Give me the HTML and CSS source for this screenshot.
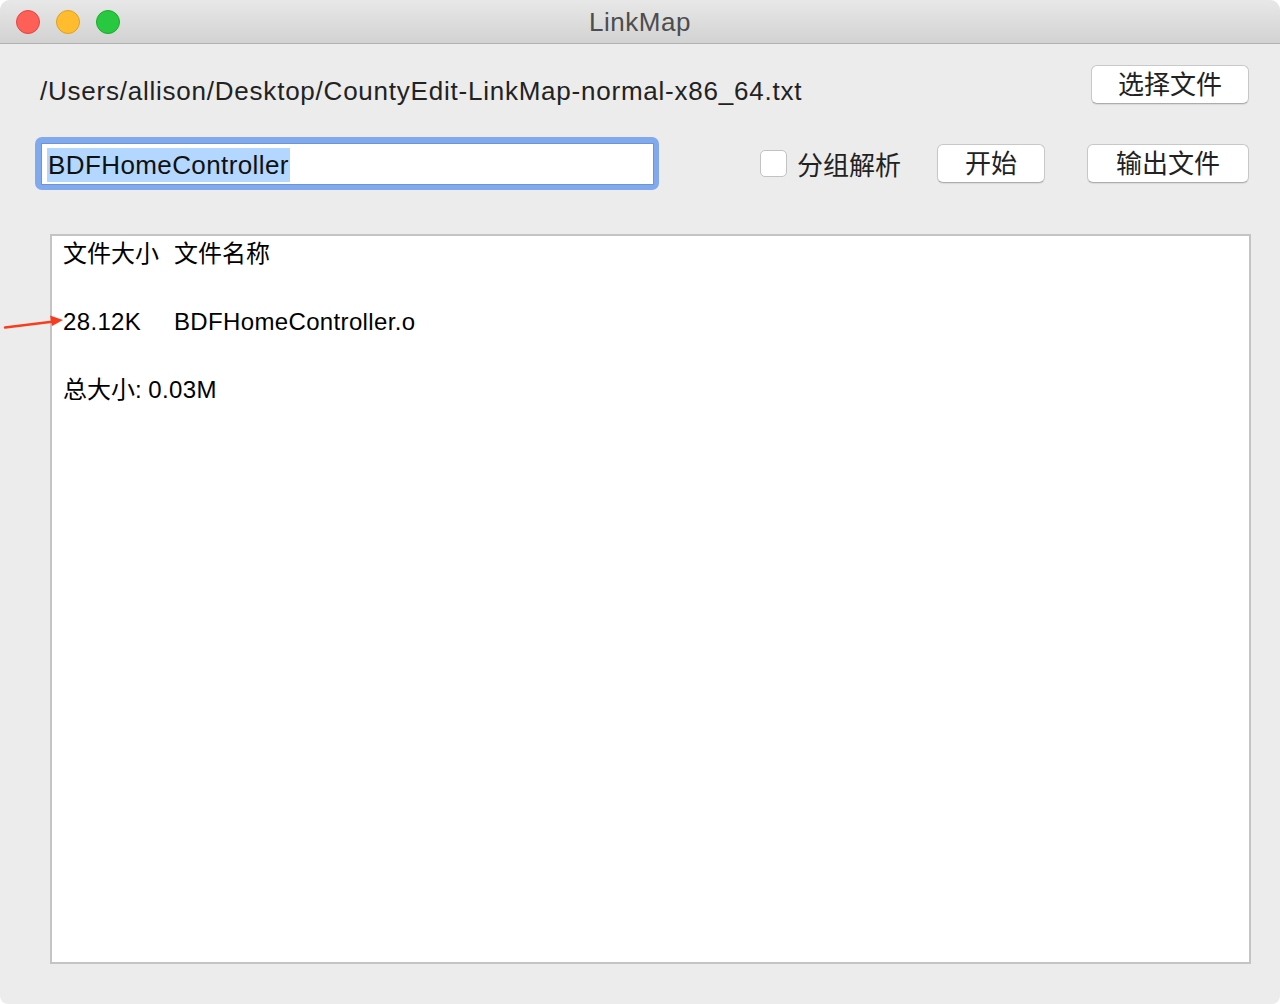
FILE: index.html
```html
<!DOCTYPE html>
<html>
<head>
<meta charset="utf-8">
<title>LinkMap</title>
<link rel="stylesheet" href="styles.css">
</head>
<body>
<div class="window">
  <div class="titlebar">
    <div class="lights">
      <span class="light red"></span>
      <span class="light yellow"></span>
      <span class="light green"></span>
    </div>
    <div class="title">LinkMap</div>
  </div>
  <div class="content">
    <div class="row row-path">
      <div class="path">/Users/allison/Desktop/CountyEdit-LinkMap-normal-x86_64.txt</div>
      <button class="btn btn-choose">选择文件</button>
    </div>
    <div class="row row-search">
      <div class="field-ring">
        <div class="field"><span class="selected">BDFHomeController</span></div>
      </div>
      <div class="controls">
        <label class="check"><span class="box"></span><span class="check-label">分组解析</span></label>
        <button class="btn btn-start">开始</button>
        <button class="btn btn-output">输出文件</button>
      </div>
    </div>
    <div class="result">
      <div class="line"><span class="col">文件大小</span><span>文件名称</span></div>
      <div class="line"></div>
      <div class="line"><span class="col latin">28.12K</span><span class="latin">BDFHomeController.o</span></div>
      <div class="line"></div>
      <div class="line">总大小: <span class="latin">0.03M</span></div>
    </div>
  </div>
  <svg class="arrow" width="70" height="20" viewBox="0 0 70 20">
    <line x1="5" y1="15.5" x2="54" y2="9.5" stroke="#fa3c1e" stroke-width="2.5" stroke-linecap="round"/>
    <polygon points="63,8 50,3.5 52,14" fill="#fa3c1e"/>
  </svg>
</div>
</body>
</html>
```

FILE: styles.css
```css
* { box-sizing: border-box; }
html, body {
  margin: 0;
  padding: 0;
  background: #ffffff;
  width: 1280px;
  height: 1004px;
  overflow: hidden;
}
.window {
  position: relative;
  width: 1280px;
  height: 1004px;
  background: #ececec;
  border-radius: 10px 10px 8px 8px;
  overflow: hidden;
  font-family: "Liberation Sans", "Noto Sans CJK SC", sans-serif;
  color: #222;
}
.titlebar {
  position: relative;
  height: 44px;
  background: linear-gradient(#e8e8e8, #d2d2d2);
  border-bottom: 1px solid #b1b1b1;
  display: flex;
  align-items: center;
  justify-content: center;
}
.lights {
  position: absolute;
  left: 16px;
  top: 10px;
  display: flex;
  gap: 16px;
}
.light {
  width: 24px;
  height: 24px;
  border-radius: 50%;
  display: block;
}
.red { background: #fe5f57; border: 1px solid #e14640; }
.yellow { background: #febc2e; border: 1px solid #dfa023; }
.green { background: #28c840; border: 1px solid #1aab29; }
.title {
  font-size: 26px;
  color: #4d4d4d;
  letter-spacing: 0.5px;
  margin-top: 1px;
}
.content {
  padding: 0 31px 0 35px;
}
.row {
  display: flex;
  align-items: center;
  justify-content: space-between;
}
.row-path {
  margin-top: 21px;
  height: 39px;
  align-items: flex-start;
}
.path {
  font-size: 26px;
  color: #222;
  padding-left: 5px;
  margin-top: 11px;
  letter-spacing: 0.77px;
  white-space: nowrap;
}
.btn {
  font-family: "Liberation Sans", "Noto Sans CJK SC", sans-serif;
  font-size: 26px;
  color: #222;
  background: #ffffff;
  border: 1px solid #c8c8c8;
  border-bottom-color: #adadad;
  border-radius: 6px;
  height: 39px;
  padding: 0;
  line-height: 36px;
  box-shadow: 0 1px 1px rgba(0,0,0,0.08);
}
.btn-choose { width: 158px; }
.btn-start { width: 108px; }
.btn-output { width: 162px; }
.row-search {
  margin-top: 33px;
  height: 53px;
}
.field-ring {
  width: 624px;
  height: 53px;
  background: #80a9ee;
  border-radius: 7px;
  padding: 6px 5px 5px 6px;
}
.field {
  width: 100%;
  height: 100%;
  background: #ffffff;
  border: 1px solid #6c94d6;
  padding: 4px 0 0 5px;
  font-size: 26px;
  color: #111;
  display: flex;
  align-items: flex-start;
}
.selected {
  background: #b3d7ff;
  line-height: 34px;
  letter-spacing: 0.4px;
  padding: 0 1px 0 1px;
}
.controls {
  display: flex;
  align-items: center;
}
.check {
  display: flex;
  align-items: center;
}
.box {
  width: 27px;
  height: 27px;
  background: #ffffff;
  border: 1px solid #c2c2c2;
  border-radius: 5px;
  display: block;
}
.check-label {
  font-size: 26px;
  margin-left: 10px;
  color: #222;
}
.btn-start { margin-left: 36px; }
.btn-output { margin-left: 42px; }
.result {
  margin: 44px 0 0 15px;
  width: 1201px;
  height: 730px;
  background: #ffffff;
  border: 2px solid #c4c4c4;
  padding: 1px 0 0 11px;
  font-size: 24px;
  color: #000;
}
.line {
  height: 34px;
  line-height: 34px;
  white-space: nowrap;
}
.latin { letter-spacing: 0.35px; }
.col {
  display: inline-block;
  width: 111px;
}
.arrow {
  position: absolute;
  left: 0;
  top: 312px;
}
```
